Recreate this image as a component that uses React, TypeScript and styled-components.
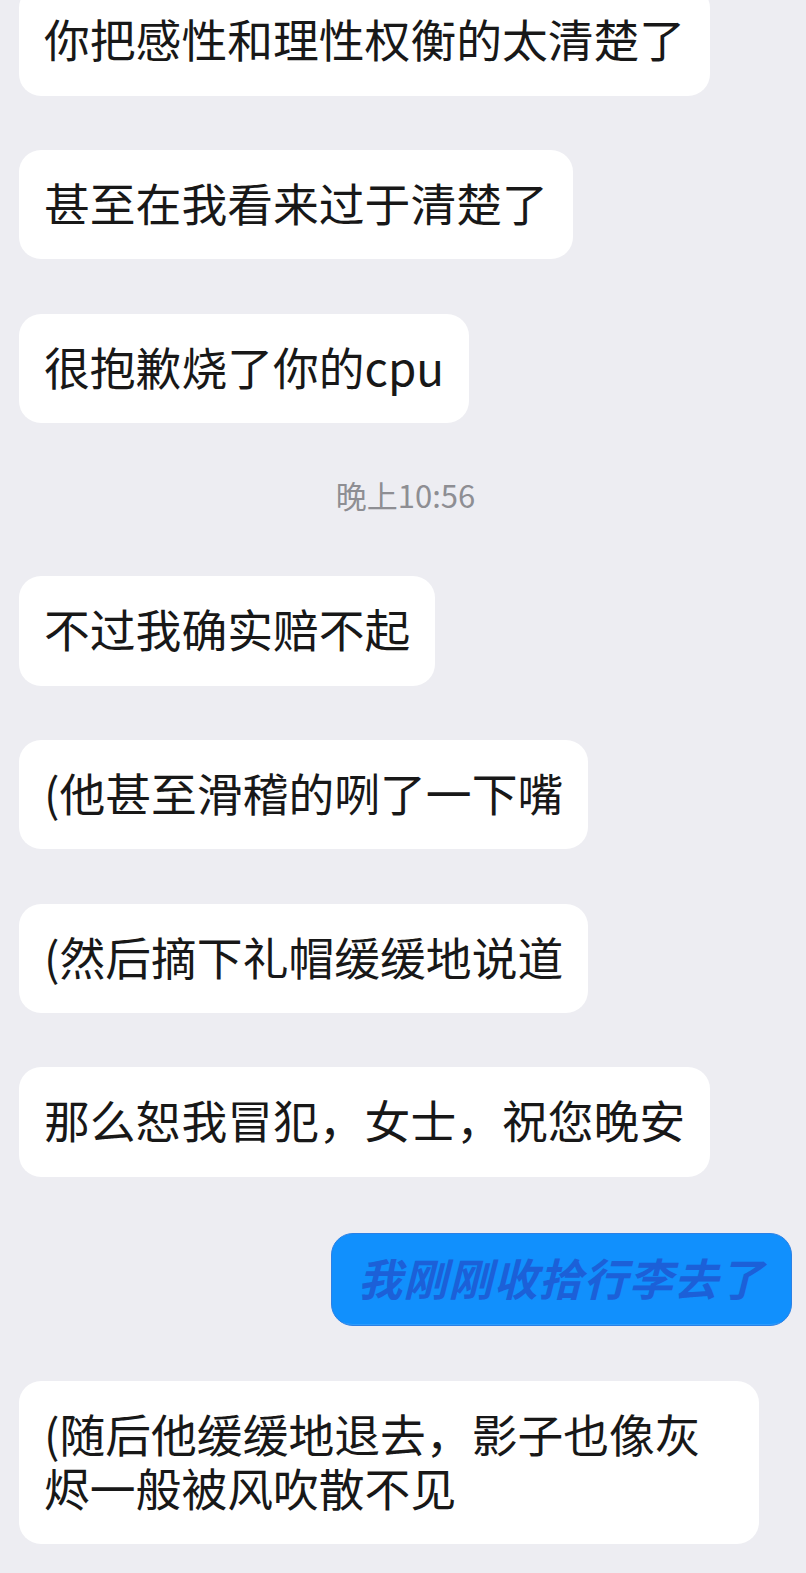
import React from "react";
import styled, { createGlobalStyle } from "styled-components";

const GlobalStyle = createGlobalStyle`
  html, body {
    margin: 0;
    padding: 0;
    background: #ededf2;
    min-height: 100%;
  }
  body {
    font-family: "Noto Sans CJK SC", "Noto Sans", sans-serif;
    overflow: hidden;
  }
`;

const Thread = styled.main`
  display: flex;
  flex-direction: column;
  gap: 54.3px;
  padding: 0 14px 0 19px;
  margin-top: -13.6px;
`;

const Bubble = styled.div`
  box-sizing: border-box;
  align-self: flex-start;
  max-width: 740px;
  border-radius: 22px;
  font-size: 45.8px;
  line-height: 54px;
  padding: 25px 25px 30.3px;
  background: #ffffff;
  color: #181818;
  font-weight: 400;
  word-break: break-all;
`;

const MineBubble = styled.div`
  box-sizing: border-box;
  align-self: flex-end;
  margin-top: 2px;
  margin-bottom: 1px;
  border-radius: 22px;
  background: #1190fd;
  border: 1px solid #2a80e6;
  box-shadow: inset 0 -12px 0 -11px rgba(255, 255, 255, 0.12);
  color: #1c60d8;
  font-size: 44px;
  font-style: italic;
  font-weight: 700;
  letter-spacing: 1.1px;
  line-height: 53px;
  padding: 17.5px 27px 20.5px 26px;
`;

const Timestamp = styled.div`
  align-self: center;
  font-size: 31px;
  line-height: 40px;
  color: #8e8e93;
  margin: -2px 0 7px;
`;

type Item =
  | { kind: "in"; text: string }
  | { kind: "out"; text: string }
  | { kind: "time"; text: string };

const items: Item[] = [
  { kind: "in", text: "你把感性和理性权衡的太清楚了" },
  { kind: "in", text: "甚至在我看来过于清楚了" },
  { kind: "in", text: "很抱歉烧了你的cpu" },
  { kind: "time", text: "晚上10:56" },
  { kind: "in", text: "不过我确实赔不起" },
  { kind: "in", text: "(他甚至滑稽的咧了一下嘴" },
  { kind: "in", text: "(然后摘下礼帽缓缓地说道" },
  { kind: "in", text: "那么恕我冒犯，女士，祝您晚安" },
  { kind: "out", text: "我刚刚收拾行李去了" },
  { kind: "in", text: "(随后他缓缓地退去，影子也像灰烬一般被风吹散不见" },
];

export default function App() {
  return (
    <>
      <GlobalStyle />
      <Thread>
        {items.map((it, i) => {
          if (it.kind === "time") return <Timestamp key={i}>{it.text}</Timestamp>;
          if (it.kind === "out") return <MineBubble key={i}>{it.text}</MineBubble>;
          return <Bubble key={i}>{it.text}</Bubble>;
        })}
      </Thread>
    </>
  );
}
